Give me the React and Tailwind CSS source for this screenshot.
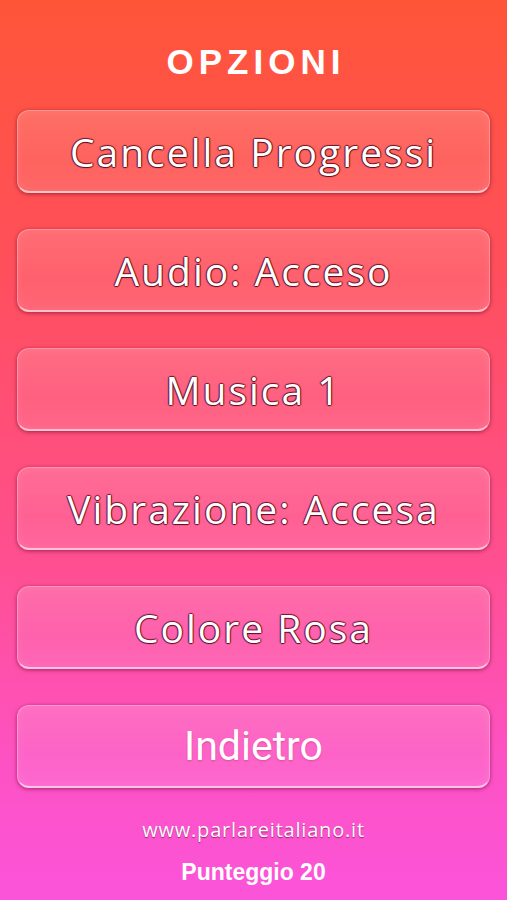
export default function App() {
  const items = [
    "Cancella Progressi",
    "Audio: Acceso",
    "Musica 1",
    "Vibrazione: Accesa",
    "Colore Rosa",
  ];
  const btn =
    "h-[83px] rounded-[12px] flex items-center justify-center bg-[linear-gradient(180deg,rgba(255,255,255,0.17)_0%,rgba(255,255,255,0.1)_60%,rgba(255,255,255,0.13)_100%)] border border-white/30 border-b-[2px] border-b-white/60 shadow-[0_1px_4px_rgba(110,0,40,0.6),inset_0_0_10px_rgba(255,255,255,0.08)]";
  return (
    <div className="w-full min-h-[900px] flex flex-col items-center bg-[linear-gradient(180deg,#fe5538_0%,#ff4f5c_30%,#ff4f8c_60%,#fd52c4_85%,#fc54da_100%)]">
      <div className="pt-[42px] h-[110px] text-white font-bold text-[35px] leading-[40px] tracking-[5px] pl-[5px] font-['Liberation_Sans',Arial,sans-serif]">
        OPZIONI
      </div>
      <div className="w-full px-[17px] flex flex-col gap-[36px]">
        {items.map((t) => (
          <div key={t} className={btn}>
            <span className="text-white text-[39px] leading-none tracking-[2px] font-['Open_Sans',sans-serif] [text-shadow:0_1px_1px_rgba(80,5,25,0.95),0_-1px_1px_rgba(80,5,25,0.8),1px_0_1px_rgba(80,5,25,0.8),-1px_0_1px_rgba(80,5,25,0.8)]">
              {t}
            </span>
          </div>
        ))}
        <div className={btn}>
          <span className="text-white text-[41px] leading-none font-['Roboto',sans-serif] [text-shadow:0_1px_2px_rgba(120,0,60,0.25)]">
            Indietro
          </span>
        </div>
      </div>
      <div className="mt-[30px] text-white text-[20px] leading-[24px] tracking-[0.8px] font-['Open_Sans',sans-serif] [text-shadow:0_1px_1px_rgba(90,10,50,0.6)]">
        www.parlareitaliano.it
      </div>
      <div className="mt-[17px] text-white font-bold text-[23px] leading-[26px] font-['Liberation_Sans',Arial,sans-serif]">
        Punteggio 20
      </div>
    </div>
  );
}
